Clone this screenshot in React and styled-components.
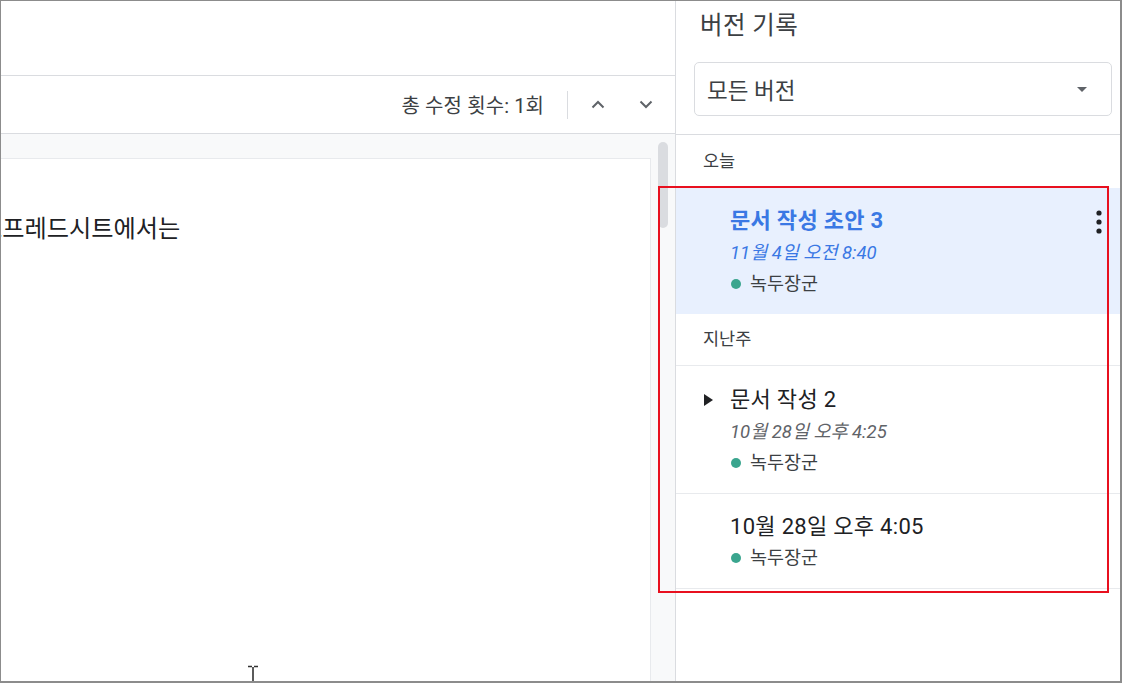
import React from 'react';
import styled, { createGlobalStyle } from 'styled-components';

const GlobalStyle = createGlobalStyle`
  html, body {
    margin: 0;
    padding: 0;
    background: #ffffff;
  }
  body {
    font-family: Roboto, "Noto Sans CJK KR", "Noto Sans", sans-serif;
    color: #202124;
  }
`;

const today = [
  {
    id: 1,
    title: '문서 작성 초안 3',
    date: '11월 4일 오전 8:40',
    user: '녹두장군',
    selected: true,
  },
];

const lastWeek = [
  { id: 2, title: '문서 작성 2', date: '10월 28일 오후 4:25', user: '녹두장군', expandable: true },
  { id: 3, title: '10월 28일 오후 4:05', user: '녹두장군' },
];

const ChevronUp = () => (
  <svg width="14" height="9" viewBox="0 0 14 9">
    <polyline points="1.5,7.5 7,2 12.5,7.5" fill="none" stroke="#5f6368" strokeWidth="2" />
  </svg>
);

const ChevronDown = () => (
  <svg width="14" height="9" viewBox="0 0 14 9">
    <polyline points="1.5,1.5 7,7 12.5,1.5" fill="none" stroke="#5f6368" strokeWidth="2" />
  </svg>
);

const Caret = () => (
  <svg width="10" height="5" viewBox="0 0 10 5">
    <polygon points="0,0 10,0 5,5" fill="#5f6368" />
  </svg>
);

const Expand = () => (
  <svg width="9" height="12" viewBox="0 0 9 12">
    <polygon points="0,0 9,6 0,12" fill="#202124" />
  </svg>
);

const Kebab = () => (
  <svg width="6" height="24" viewBox="0 0 6 24">
    <circle cx="3" cy="3" r="2.6" fill="#202124" />
    <circle cx="3" cy="12" r="2.6" fill="#202124" />
    <circle cx="3" cy="21" r="2.6" fill="#202124" />
  </svg>
);

const IBeam = () => (
  <svg width="12" height="16" viewBox="0 0 12 16">
    <path d="M1 1.5 H5 M7 1.5 H11 M6 2 V16" fill="none" stroke="#333" strokeWidth="1.6" />
  </svg>
);

const App = () => {
  return (
    <Frame>
      <GlobalStyle />
      <Doc>
        <TopArea />
        <Toolbar>
          <Count>총 수정 횟수: 1회</Count>
          <ToolDivider />
          <IconButton><ChevronUp /></IconButton>
          <IconButton><ChevronDown /></IconButton>
        </Toolbar>
        <Canvas>
          <Viewport>
            <Page>
              <PageText>스프레드시트에서는</PageText>
            </Page>
          </Viewport>
          <Track>
            <Thumb />
          </Track>
        </Canvas>
        <Cursor><IBeam /></Cursor>
      </Doc>

      <Panel>
        <PanelHead>
          <PanelTitle>버전 기록</PanelTitle>
          <Select>
            <span>모든 버전</span>
            <Caret />
          </Select>
        </PanelHead>

        <GroupLabel>오늘</GroupLabel>
        {today.map((v) => (
          <Item key={v.id} selected={v.selected} top={17} bottom={16}>
            <ItemTitle selected={v.selected}>{v.title}</ItemTitle>
            <ItemDate selected={v.selected}>{v.date}</ItemDate>
            <User><Dot />{v.user}</User>
            <MoreButton><Kebab /></MoreButton>
          </Item>
        ))}

        <GroupLabel divided>지난주</GroupLabel>
        {lastWeek.map((v) => (
          <Item key={v.id} divided top={v.date ? 18 : 17} bottom={v.date ? 16 : 15}>
            {v.expandable && <ExpandIcon><Expand /></ExpandIcon>}
            <ItemTitle>{v.title}</ItemTitle>
            {v.date && <ItemDate>{v.date}</ItemDate>}
            <User last={!v.date}><Dot />{v.user}</User>
          </Item>
        ))}
      </Panel>

      <Highlight />
    </Frame>
  );
};

export default App;

const Frame = styled.div`
  position: relative;
  width: 1122px;
  height: 683px;
  box-sizing: border-box;
  border-top: 1px solid #8c8c8c;
  border-left: 1px solid #8c8c8c;
  border-right: 2px solid #8c8c8c;
  border-bottom: 2px solid #8c8c8c;
  display: flex;
  overflow: hidden;
  background: #fff;
`;

const Doc = styled.div`
  position: relative;
  width: 674px;
  display: flex;
  flex-direction: column;
  overflow: hidden;
`;

const TopArea = styled.div`
  height: 74px;
  border-bottom: 1px solid #dadce0;
`;

const Toolbar = styled.div`
  height: 57px;
  border-bottom: 1px solid #dadce0;
  display: flex;
  align-items: center;
  justify-content: flex-end;
  padding-right: 17px;
`;

const Count = styled.div`
  font-size: 20px;
  letter-spacing: 0.1px;
  color: #3c4043;
`;

const ToolDivider = styled.div`
  width: 1px;
  height: 28px;
  background: #dadce0;
  margin: 0 18px 0 23px;
`;

const IconButton = styled.div`
  width: 24px;
  height: 24px;
  display: flex;
  align-items: center;
  justify-content: center;
  & + & {
    margin-left: 24px;
  }
`;

const Canvas = styled.div`
  flex: 1;
  display: flex;
  background: #f8f9fa;
  min-height: 0;
`;

const Viewport = styled.div`
  flex: 1;
  display: flex;
  justify-content: flex-end;
  padding-top: 24px;
  overflow: hidden;
`;

const Page = styled.div`
  flex-shrink: 0;
  width: 820px;
  background: #fff;
  border-top: 1px solid #e8eaed;
  border-right: 1px solid #e8eaed;
  padding-top: 55px;
`;

const PageText = styled.div`
  font-size: 24.2px;
  color: #202124;
  padding-left: 150px;
  line-height: 30px;
`;

const Track = styled.div`
  width: 24px;
  padding: 8px 0 0 7px;
  box-sizing: border-box;
`;

const Thumb = styled.div`
  width: 10px;
  height: 86px;
  border-radius: 5px;
  background: #dadce0;
`;

const Cursor = styled.div`
  position: absolute;
  left: 246px;
  bottom: 0;
  line-height: 0;
`;

const Panel = styled.div`
  flex: 1;
  border-left: 1px solid #dadce0;
  display: flex;
  flex-direction: column;
`;

const PanelHead = styled.div`
  height: 134px;
  border-bottom: 1px solid #dadce0;
  box-sizing: border-box;
`;

const PanelTitle = styled.div`
  height: 49px;
  line-height: 49px;
  padding-left: 24px;
  font-size: 24.5px;
  letter-spacing: 0.4px;
  color: #3c4043;
`;

const Select = styled.div`
  margin: 12px 8px 0 18px;
  height: 54px;
  box-sizing: border-box;
  border: 1px solid #dadce0;
  border-radius: 5px;
  display: flex;
  align-items: center;
  justify-content: space-between;
  padding: 0 24px 0 12px;
  font-size: 22.5px;
  color: #3c4043;
`;

const GroupLabel = styled.div`
  height: ${(p) => (p.divided ? '51px' : '53px')};
  line-height: ${(p) => (p.divided ? '51px' : '53px')};
  padding-left: 27px;
  font-size: 17.5px;
  color: #3c4043;
  border-bottom: ${(p) => (p.divided ? '1px solid #e8eaed' : 'none')};
`;

const Item = styled.div`
  position: relative;
  padding: ${(p) => p.top}px 0 ${(p) => p.bottom}px 54px;
  background: ${(p) => (p.selected ? '#e8f0fe' : '#fff')};
  border-bottom: ${(p) => (p.divided ? '1px solid #e8eaed' : 'none')};
`;

const ItemTitle = styled.div`
  font-size: 22px;
  letter-spacing: 0.3px;
  line-height: 32px;
  font-weight: ${(p) => (p.selected ? 700 : 400)};
  color: ${(p) => (p.selected ? '#3a78e4' : '#202124')};
`;

const ItemDate = styled.div`
  font-size: 18.5px;
  line-height: 33px;
  font-style: italic;
  color: ${(p) => (p.selected ? '#3a78e4' : '#5f6368')};
`;

const User = styled.div`
  display: flex;
  align-items: center;
  font-size: 18.5px;
  line-height: ${(p) => (p.last ? '30px' : '28px')};
  color: #3c4043;
`;

const Dot = styled.span`
  width: 10px;
  height: 10px;
  border-radius: 50%;
  background: #3aa58e;
  margin: 0 9px 0 1px;
`;

const ExpandIcon = styled.div`
  position: absolute;
  left: 28px;
  top: 28px;
  line-height: 0;
`;

const MoreButton = styled.div`
  position: absolute;
  right: 18px;
  top: 22px;
  line-height: 0;
`;

const Highlight = styled.div`
  position: absolute;
  left: 657px;
  top: 185px;
  width: 451px;
  height: 407px;
  box-sizing: border-box;
  border: 2px solid #e8101f;
  pointer-events: none;
`;
